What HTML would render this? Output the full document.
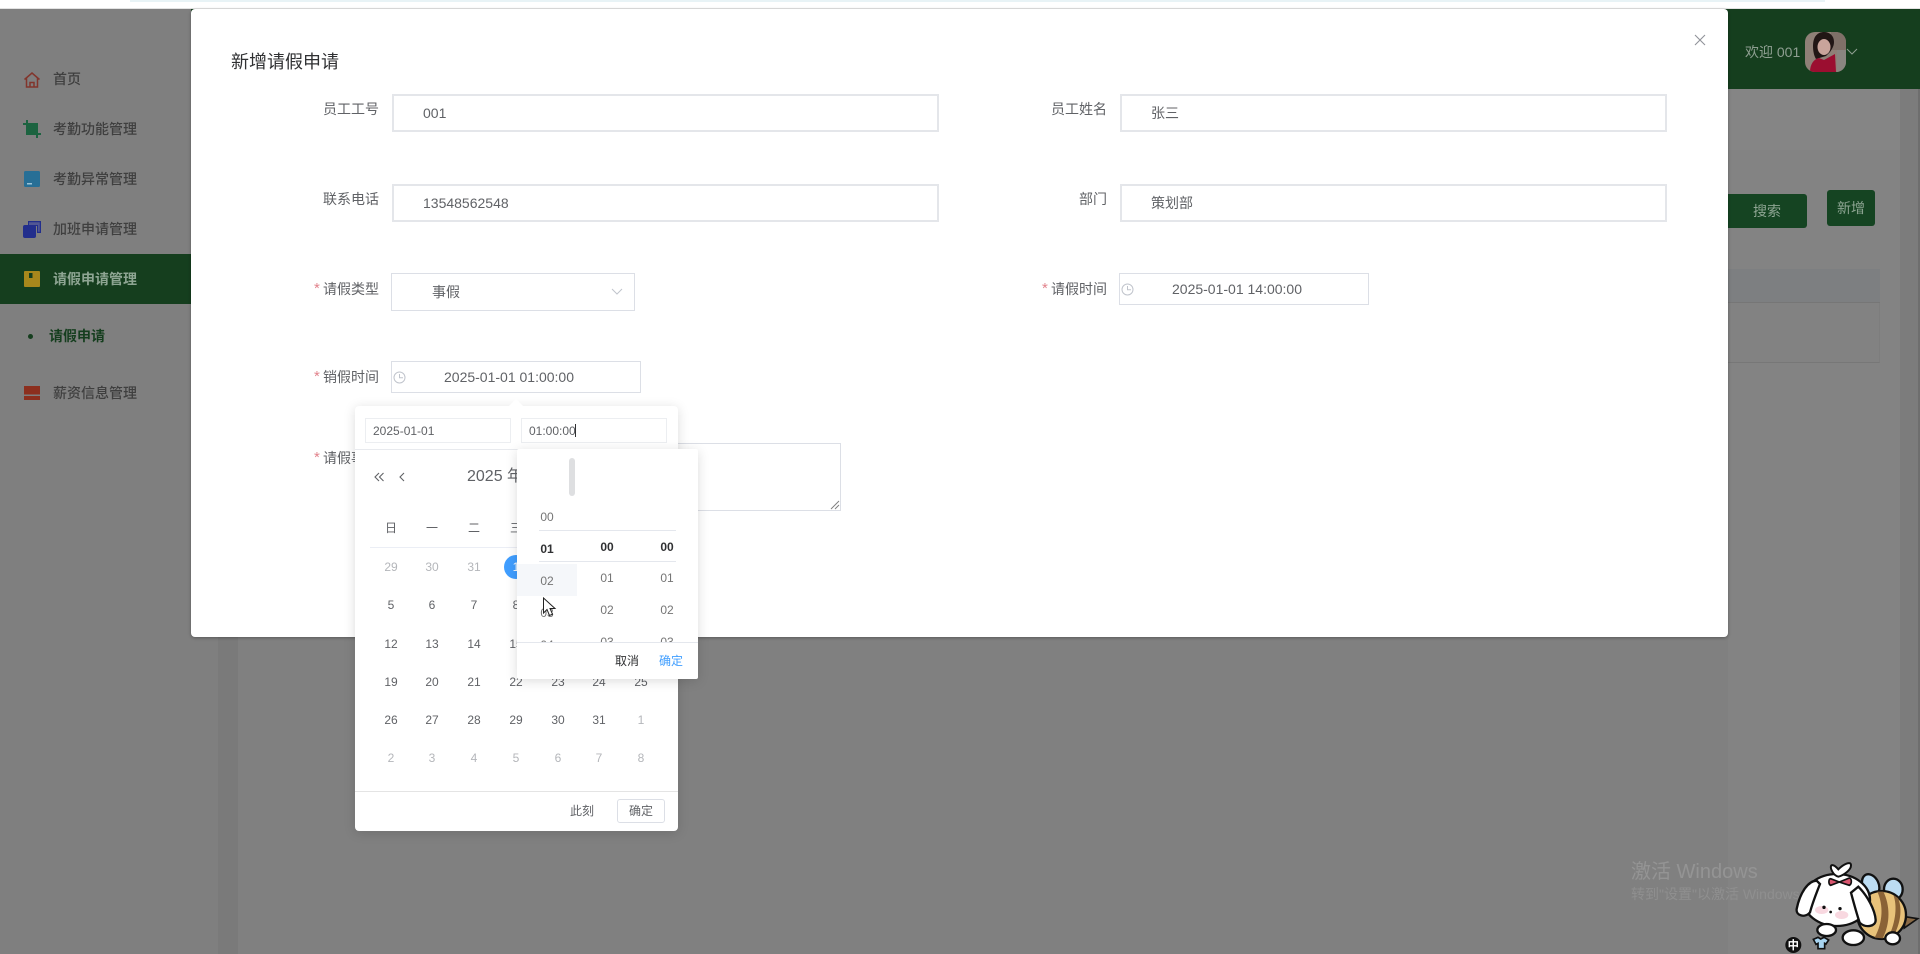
<!DOCTYPE html>
<html lang="zh-CN">
<head>
<meta charset="utf-8">
<title>新增请假申请</title>
<style>
html,body{margin:0;padding:0;width:1920px;height:954px;overflow:hidden;background:#808080;font-family:"Liberation Sans","Noto Sans CJK SC",sans-serif;color:#606266}
.a{position:absolute;box-sizing:border-box}
.t{position:absolute;line-height:20px;height:20px;white-space:nowrap;font-size:14px}
.c{position:absolute;line-height:20px;height:20px;width:40px;text-align:center;font-size:12px;white-space:nowrap}
.m{color:#3f3f3f;font-weight:500;font-size:14px}
.l{color:#606266;font-size:14px;text-align:right;width:100px;left:279px}
.r{color:#606266;font-size:14px;text-align:right;width:100px;left:1007px}
.s{position:absolute;color:#e2838c;font-size:15px;line-height:14px}
.in{position:absolute;box-sizing:border-box;border:2px solid #e4e6ea;background:#fff}
.d{color:#606266}
.g{color:#b4b6ba}
.b{font-weight:700;color:#303133}
svg{position:absolute;display:block}
</style>
</head>
<body>
<!-- top browser strip -->
<div class="a" style="left:0;top:0;width:1920px;height:9px;background:#fff"></div>
<div class="a" style="left:130px;top:0;width:1695px;height:2px;background:#e8f3f6"></div>
<div class="a" style="left:0;top:8px;width:1920px;height:1px;background:#e2e2e2"></div>

<!-- backdrop page -->
<div class="a" style="left:0;top:9px;width:218px;height:945px;background:#7f7f7f"></div>
<div class="a" style="left:218px;top:89px;width:20px;height:865px;background:#7a7a7a"></div>
<div class="a" style="left:238px;top:89px;width:1662px;height:865px;background:#808080"></div>
<div class="a" style="left:1728px;top:89px;width:192px;height:865px;background:#858585"></div>
<div class="a" style="left:1728px;top:150px;width:172px;height:804px;background:#838383"></div>
<div class="a" style="left:1900px;top:89px;width:20px;height:865px;background:#7c7c7c"></div>
<div class="a" style="left:1918px;top:89px;width:2px;height:865px;background:#6e6e6e"></div>

<!-- header -->
<div class="a" style="left:191px;top:9px;width:1729px;height:80px;background:#153e1e"></div>
<div class="t" style="left:1745px;top:42px;color:#8f9f92">欢迎 001</div>
<svg style="left:1805px;top:32px" width="41" height="40" viewBox="0 0 41 40">
  <defs><clipPath id="av"><rect width="41" height="40" rx="10"/></clipPath></defs>
  <g clip-path="url(#av)">
    <rect width="41" height="40" fill="#8f8077"/>
    <rect x="26" y="0" width="15" height="18" fill="#7f7068"/>
    <rect x="32" y="18" width="9" height="22" fill="#8a8580"/>
    <path d="M8 14C8 4 13 0 19 0c6 0 10 4 10 10 0 4-2 7-4 10l-4 4-10 3C9 24 8 19 8 14z" fill="#211615"/>
    <ellipse cx="19" cy="15" rx="6.500" ry="8" fill="#c9a49b"/>
    <path d="M5 40c0-8 4-13 9-14l5 2 11-6 1 18z" fill="#9b0e30"/>
  </g>
</svg>
<svg style="left:1846px;top:47px" width="12" height="10" viewBox="0 0 12 10"><path d="M1 2l5 5 5-5" fill="none" stroke="#8f9f92" stroke-width="1"/></svg>

<!-- sidebar -->
<div class="a" style="left:0;top:254px;width:191px;height:50px;background:#153e1e"></div>
<svg style="left:23px;top:71px" width="18" height="18" viewBox="0 0 18 18"><path d="M1.500 8.500L9 2l7.500 6.500M3.500 7v9h11V7M7 16v-4.500h4V16" fill="none" stroke="#82352c" stroke-width="1.5"/></svg>
<div class="t m" style="left:53px;top:69px">首页</div>
<svg style="left:23px;top:120px" width="18" height="18" viewBox="0 0 18 18"><path d="M3 0h2v3h10v10h3v2h-3v3h-2v-3H3V5H0V3h3z" fill="#1c6340"/></svg>
<div class="t m" style="left:53px;top:119px">考勤功能管理</div>
<svg style="left:24px;top:171px" width="16" height="16" viewBox="0 0 16 16"><rect width="16" height="16" rx="1.500" fill="#276f96"/><rect x="3" y="12" width="5" height="1.500" fill="#9cc4d8"/></svg>
<div class="t m" style="left:53px;top:169px">考勤异常管理</div>
<svg style="left:23px;top:221px" width="18" height="17" viewBox="0 0 18 17"><path d="M5 0h13v12h-4V5H5z" fill="#222e8c"/><rect x="0" y="4" width="13" height="13" rx="2" fill="#222e8c"/><path d="M14 1.200h2.800v9.500H15V4H6V1.200z" fill="#7f7f9a" opacity=".5"/></svg>
<div class="t m" style="left:53px;top:219px">加班申请管理</div>
<svg style="left:24px;top:271px" width="16" height="16" viewBox="0 0 16 16"><rect width="16" height="16" rx="1" fill="#a8871c"/><rect x="5" y="2" width="3.500" height="5" fill="#153e1e"/></svg>
<div class="t m" style="left:53px;top:269px;color:#8ea593;font-weight:700">请假申请管理</div>
<div class="a" style="left:28px;top:334px;width:5px;height:5px;border-radius:50%;background:#153e1e"></div>
<div class="t" style="left:49px;top:326px;color:#153e1e;font-weight:700">请假申请</div>
<svg style="left:24px;top:386px" width="16" height="14" viewBox="0 0 16 14"><rect width="16" height="8.500" fill="#8c2f1e"/><rect y="10" width="16" height="4" fill="#8c2f1e"/></svg>
<div class="t m" style="left:53px;top:383px">薪资信息管理</div>

<!-- buttons behind mask -->
<div class="a" style="left:1700px;top:194px;width:107px;height:34px;background:#154422;border-radius:3px"></div>
<div class="c" style="left:1747px;top:201px;font-size:14px;color:#8ea593">搜索</div>
<div class="a" style="left:1827px;top:190px;width:48px;height:36px;background:#154422;border-radius:3px"></div>
<div class="c" style="left:1831px;top:198px;font-size:14px;color:#8ea593">新增</div>
<div class="a" style="left:1728px;top:269px;width:152px;height:34px;background:#7d7f81;border-bottom:1px solid #767676"></div>
<div class="a" style="left:1728px;top:303px;width:152px;height:60px;background:#828282;border-bottom:1px solid #777;border-right:1px solid #7d7d7d"></div>

<!-- watermark -->
<div class="t" style="left:1631px;top:862px;font-size:20px;color:#949494">激活 Windows</div>
<div class="t" style="left:1631px;top:884px;font-size:14px;color:#8f8f8f">转到"设置"以激活 Windows。</div>

<!-- mascot -->
<svg style="left:1780px;top:850px" width="140" height="104" viewBox="0 0 420 312">
  <ellipse cx="272" cy="105" rx="24" ry="34" fill="#bcdcf2" stroke="#111" stroke-width="7" transform="rotate(-25 272 105)"/>
  <ellipse cx="340" cy="118" rx="28" ry="32" fill="#bcdcf2" stroke="#111" stroke-width="7"/>
  <path d="M375 200l38 6-40 28z" fill="#8a6a45" stroke="#111" stroke-width="5"/>
  <ellipse cx="305" cy="195" rx="73" ry="72" fill="#e8c27a" stroke="#111" stroke-width="7"/>
  <path d="M292 125c18 40 18 90 -8 138l24 2c24-45 22-100 2-140zM340 135c12 30 8 80-14 125l18-8c20-40 22-80 10-108z" fill="#8a6236"/>
  <ellipse cx="170" cy="150" rx="100" ry="78" fill="#fff" stroke="#111" stroke-width="7"/>
  <path d="M110 92c-25 0-50 35-60 85-3 20 25 28 40 10 8-30 20-60 30-85z" fill="#fff" stroke="#111" stroke-width="7"/>
  <path d="M235 110c28 28 50 70 52 100 0 20-30 25-48 8-10-30-18-60-26-90z" fill="#fff" stroke="#111" stroke-width="7"/>
  <ellipse cx="125" cy="180" rx="20" ry="12" fill="#f8d8e0"/>
  <ellipse cx="185" cy="195" rx="20" ry="12" fill="#f8d8e0"/>
  <circle cx="132" cy="172" r="5" fill="#111"/><circle cx="152" cy="186" r="4" fill="#111"/><circle cx="180" cy="176" r="5" fill="#111"/>
  <path d="M175 58c-10-12-20-16-22-10s5 28 22 32c16-4 38-20 38-34s-22-4-38 12z" fill="#fff" stroke="#111" stroke-width="6"/>
  <path d="M178 96l-26-10c-6 0-8 16 0 20zM178 96l30-12c8 2 8 18 0 22z" fill="#d9566f" stroke="#111" stroke-width="5"/>
  <ellipse cx="140" cy="240" rx="28" ry="18" fill="#fff" stroke="#111" stroke-width="7"/>
  <ellipse cx="220" cy="263" rx="32" ry="22" fill="#fff" stroke="#111" stroke-width="7"/>
  <ellipse cx="338" cy="265" rx="22" ry="18" fill="#fff" stroke="#111" stroke-width="7"/>
  <path d="M100 268l14-6 8 5 10-5 14 8-8 12-4-2v16h-20v-16l-6 3z" fill="#a8d4f0" stroke="#111" stroke-width="5"/>
  <circle cx="40" cy="285" r="24" fill="#111"/>
  <text x="40" y="297" text-anchor="middle" font-size="34" font-weight="700" fill="#fff" font-family="'Noto Sans CJK SC',sans-serif">中</text>
</svg>

<!-- modal -->
<div class="a" style="left:191px;top:9px;width:1537px;height:628px;background:#fff;border-radius:4px;box-shadow:0 1px 3px rgba(0,0,0,.3)"></div>
<div class="t" style="left:231px;top:52px;font-size:18px;color:#303133">新增请假申请</div>
<svg style="left:1694px;top:34px" width="12" height="12" viewBox="0 0 12 12"><path d="M1 1l10 10M11 1L1 11" stroke="#909399" stroke-width="1.100"/></svg>

<div class="t l" style="top:99px">员工工号</div>
<div class="in" style="left:392px;top:94px;width:547px;height:38px"></div>
<div class="t d" style="left:423px;top:103px">001</div>
<div class="t r" style="top:99px">员工姓名</div>
<div class="in" style="left:1120px;top:94px;width:547px;height:38px"></div>
<div class="t d" style="left:1151px;top:103px">张三</div>

<div class="t l" style="top:189px">联系电话</div>
<div class="in" style="left:392px;top:184px;width:547px;height:38px"></div>
<div class="t d" style="left:423px;top:193px">13548562548</div>
<div class="t r" style="top:189px">部门</div>
<div class="in" style="left:1120px;top:184px;width:547px;height:38px"></div>
<div class="t d" style="left:1151px;top:193px">策划部</div>

<div class="s" style="left:314px;top:282px">*</div>
<div class="t l" style="top:279px">请假类型</div>
<div class="a" style="left:391px;top:273px;width:244px;height:38px;border:1px solid #dcdfe6"></div>
<div class="t d" style="left:432px;top:282px">事假</div>
<svg style="left:611px;top:287px" width="12" height="10" viewBox="0 0 12 10"><path d="M1 2l5 5 5-5" fill="none" stroke="#c0c4cc" stroke-width="1"/></svg>

<div class="s" style="left:1042px;top:282px">*</div>
<div class="t r" style="top:279px">请假时间</div>
<div class="a" style="left:1119px;top:273px;width:250px;height:32px;border:1px solid #dcdfe6"></div>
<svg style="left:1121px;top:283px" width="13" height="13" viewBox="0 0 13 13"><circle cx="6.500" cy="6.500" r="5.500" fill="none" stroke="#c0c4cc"/><path d="M6.500 3v3.700H10" fill="none" stroke="#c0c4cc"/></svg>
<div class="t d" style="left:1172px;top:279px">2025-01-01 14:00:00</div>

<div class="s" style="left:314px;top:370px">*</div>
<div class="t l" style="top:367px">销假时间</div>
<div class="a" style="left:391px;top:361px;width:250px;height:32px;border:1px solid #dcdfe6"></div>
<svg style="left:393px;top:371px" width="13" height="13" viewBox="0 0 13 13"><circle cx="6.500" cy="6.500" r="5.500" fill="none" stroke="#c0c4cc"/><path d="M6.500 3v3.700H10" fill="none" stroke="#c0c4cc"/></svg>
<div class="t d" style="left:444px;top:367px">2025-01-01 01:00:00</div>

<div class="s" style="left:314px;top:451px">*</div>
<div class="t l" style="top:448px">请假事由</div>
<div class="a" style="left:391px;top:443px;width:450px;height:68px;border:1px solid #dcdfe6"></div>
<svg style="left:830px;top:500px" width="10" height="10" viewBox="0 0 10 10"><path d="M9 1L1 9M9 5L5 9" stroke="#808080" stroke-width="1"/></svg>

<!-- date popover -->
<div class="a" style="left:355px;top:406px;width:323px;height:425px;background:#fff;border-radius:4px;box-shadow:0 2px 12px rgba(0,0,0,.14)"></div>
<div class="a" style="left:511px;top:401px;width:10px;height:10px;background:#fff;transform:rotate(45deg)"></div>
<div class="a" style="left:365px;top:418px;width:146px;height:25px;border:1px solid #eceef1"></div>
<div class="c" style="left:373px;top:421px;width:auto;color:#606266">2025-01-01</div>
<div class="a" style="left:521px;top:418px;width:146px;height:25px;border:1px solid #eceef1"></div>
<div class="c" style="left:529px;top:421px;width:auto;color:#606266">01:00:00</div>
<div class="a" style="left:575px;top:424px;width:1px;height:13px;background:#303133"></div>
<div class="a" style="left:355px;top:449px;width:323px;height:1px;background:#e8eaee"></div>

<svg style="left:373px;top:471px" width="13" height="12" viewBox="0 0 13 12"><path d="M6 2L2 6l4 4M10.500 2l-4 4 4 4" fill="none" stroke="#606266" stroke-width="1.100"/></svg>
<svg style="left:398px;top:471px" width="8" height="12" viewBox="0 0 8 12"><path d="M6 2L2 6l4 4" fill="none" stroke="#606266" stroke-width="1.100"/></svg>
<div class="t" style="left:467px;top:467px;font-size:16px;color:#606266">2025 年 1 月</div>

<div class="c" style="left:371px;top:518px">日</div>
<div class="c" style="left:412px;top:518px">一</div>
<div class="c" style="left:454px;top:518px">二</div>
<div class="c" style="left:496px;top:518px">三</div>
<div class="a" style="left:370px;top:547px;width:290px;height:1px;background:#ebeef5"></div>

<div class="c g" style="left:371px;top:557px">29</div><div class="c g" style="left:412px;top:557px">30</div><div class="c g" style="left:454px;top:557px">31</div>
<div class="a" style="left:504px;top:555px;width:24px;height:24px;border-radius:50%;background:#409eff"></div>
<div class="c" style="left:496px;top:557px;color:#fff">1</div>

<div class="c" style="left:371px;top:595px">5</div><div class="c" style="left:412px;top:595px">6</div><div class="c" style="left:454px;top:595px">7</div><div class="c" style="left:496px;top:595px">8</div>
<div class="c" style="left:371px;top:634px">12</div><div class="c" style="left:412px;top:634px">13</div><div class="c" style="left:454px;top:634px">14</div><div class="c" style="left:496px;top:634px">15</div>
<div class="c" style="left:371px;top:672px">19</div><div class="c" style="left:412px;top:672px">20</div><div class="c" style="left:454px;top:672px">21</div><div class="c" style="left:496px;top:672px">22</div><div class="c" style="left:538px;top:672px">23</div><div class="c" style="left:579px;top:672px">24</div><div class="c" style="left:621px;top:672px">25</div>
<div class="c" style="left:371px;top:710px">26</div><div class="c" style="left:412px;top:710px">27</div><div class="c" style="left:454px;top:710px">28</div><div class="c" style="left:496px;top:710px">29</div><div class="c" style="left:538px;top:710px">30</div><div class="c" style="left:579px;top:710px">31</div><div class="c g" style="left:621px;top:710px">1</div>
<div class="c g" style="left:371px;top:748px">2</div><div class="c g" style="left:412px;top:748px">3</div><div class="c g" style="left:454px;top:748px">4</div><div class="c g" style="left:496px;top:748px">5</div><div class="c g" style="left:538px;top:748px">6</div><div class="c g" style="left:579px;top:748px">7</div><div class="c g" style="left:621px;top:748px">8</div>

<div class="a" style="left:355px;top:791px;width:323px;height:1px;background:#e4e4e4"></div>
<div class="c" style="left:562px;top:801px">此刻</div>
<div class="a" style="left:617px;top:799px;width:48px;height:24px;border:1px solid #dcdfe6;border-radius:3px"></div>
<div class="c" style="left:621px;top:801px">确定</div>

<!-- time panel -->
<div class="a" style="left:517px;top:449px;width:181px;height:230px;background:#fff;border-radius:2px;box-shadow:0 2px 12px rgba(0,0,0,.14)"></div>
<div class="a" style="left:569px;top:458px;width:6px;height:38px;background:#dedfe1;border-radius:3px"></div>
<div class="a" style="left:517px;top:564px;width:60px;height:32px;background:#f5f7fa"></div>
<div class="a" style="left:539px;top:530px;width:137px;height:1px;background:#e4e7ed"></div>
<div class="a" style="left:539px;top:561px;width:137px;height:1px;background:#e4e7ed"></div>

<div class="c" style="left:527px;top:507px;color:#757575">00</div>
<div class="c b" style="left:527px;top:539px">01</div>
<div class="c" style="left:527px;top:571px;color:#757575">02</div>
<div class="c" style="left:527px;top:603px;color:#757575">03</div>
<div class="c b" style="left:587px;top:537px">00</div>
<div class="c" style="left:587px;top:568px;color:#757575">01</div>
<div class="c" style="left:587px;top:600px;color:#757575">02</div>
<div class="c b" style="left:647px;top:537px">00</div>
<div class="c" style="left:647px;top:568px;color:#757575">01</div>
<div class="c" style="left:647px;top:600px;color:#757575">02</div>
<div class="a" style="left:517px;top:630px;width:181px;height:12px;overflow:hidden">
  <div class="c" style="left:10px;top:5px;color:#757575">04</div>
  <div class="c" style="left:70px;top:2px;color:#757575">03</div>
  <div class="c" style="left:130px;top:2px;color:#757575">03</div>
</div>
<div class="a" style="left:517px;top:642px;width:181px;height:1px;background:#e4e7ed"></div>
<div class="c" style="left:607px;top:651px;color:#303133">取消</div>
<div class="c" style="left:651px;top:651px;color:#409eff">确定</div>

<!-- cursor -->
<svg style="left:542px;top:597px" width="16" height="22" viewBox="0 0 16 22"><path d="M1.500 1v15l3.500-3.500 2.500 6 3-1.300-2.500-5.700h5z" fill="#fff" stroke="#222" stroke-width="1"/></svg>
</body>
</html>
